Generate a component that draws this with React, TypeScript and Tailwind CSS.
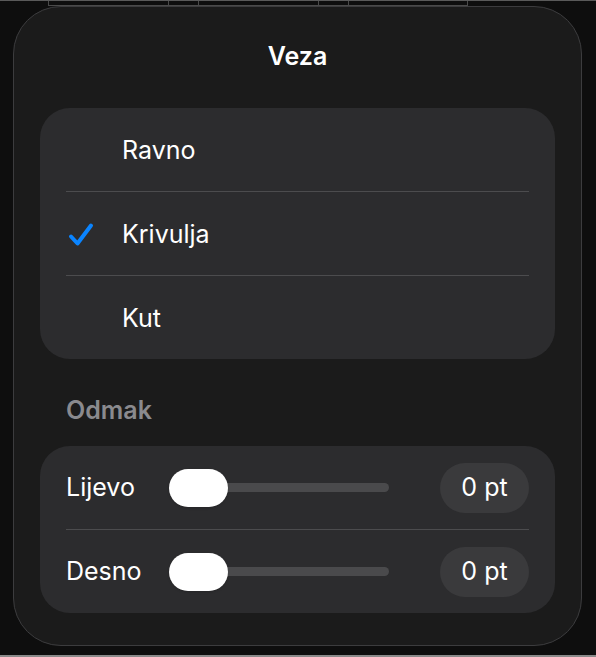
import React from "react";

const font = { fontFamily: "Inter, 'Noto Sans', sans-serif" };

const Check = () => (
  <svg width="26" height="26" viewBox="0 0 26 26" fill="none">
    <path
      d="M3 14.5 L9.5 21.5 L23 3.5"
      stroke="#0a84ff"
      strokeWidth="4"
      strokeLinecap="round"
      strokeLinejoin="round"
    />
  </svg>
);

const OptionRow = ({ label, checked }: { label: string; checked?: boolean }) => (
  <div className="flex items-center h-[83px] pt-[2px]">
    <div className="w-[82px] pl-[28px] flex items-center">{checked && <Check />}</div>
    <span className="text-[25px] text-white">{label}</span>
  </div>
);

const SliderRow = ({ label }: { label: string }) => (
  <div className="flex items-center h-[83px] px-[26px]">
    <span className="w-[103px] text-[25px] text-white">{label}</span>
    <div className="relative w-[220px] h-[38px] flex items-center">
      <div className="w-full h-[9px] rounded-full bg-[#4a4a4c]" />
      <div className="absolute left-0 top-0 w-[59px] h-[38px] rounded-full bg-white shadow" />
    </div>
    <div className="ml-auto w-[89px] h-[50px] rounded-full bg-[#3a3a3c] flex items-center justify-center text-[25px] text-white">
      0 pt
    </div>
  </div>
);

export default function App() {
  return (
    <div className="w-[596px] h-[657px] bg-[#0e0e0e] flex flex-col overflow-hidden" style={font}>
      {/* table grid behind the popover */}
      <div className="h-[6px] flex border-t border-[#5a5a5a] shrink-0">
        <div className="w-[48px]" />
        <div className="w-[120px] border-l border-b border-[#4a4a4a]" />
        <div className="w-[30px] border-l border-b border-[#4a4a4a]" />
        <div className="w-[120px] border-l border-b border-[#4a4a4a]" />
        <div className="w-[30px] border-l border-b border-[#4a4a4a]" />
        <div className="w-[120px] border-l border-r border-b border-[#4a4a4a]" />
      </div>

      <div className="mx-[13px] w-[569px] h-[640px] shrink-0 rounded-[48px] border border-[#3c3c3e] bg-[#1b1b1b] px-[26px]">
        <h1 className="text-center text-[25px] font-semibold text-white pt-[31px] h-[101px]">Veza</h1>

        <div className="rounded-[30px] bg-[#2c2c2e]">
          <OptionRow label="Ravno" />
          <div className="mx-[26px] h-px bg-[#4c4c4e]" />
          <OptionRow label="Krivulja" checked />
          <div className="mx-[26px] h-px bg-[#4c4c4e]" />
          <OptionRow label="Kut" />
        </div>

        <div className="h-[87px] flex items-center pl-[26px] pt-[17px]">
          <span className="text-[25px] font-semibold text-[#8a8a8e]">Odmak</span>
        </div>

        <div className="rounded-[30px] bg-[#2c2c2e]">
          <SliderRow label="Lijevo" />
          <div className="mx-[26px] h-px bg-[#4c4c4e]" />
          <SliderRow label="Desno" />
        </div>
      </div>

      <div className="flex-1 border-b-2 border-[#8a8a8a]" />
    </div>
  );
}
